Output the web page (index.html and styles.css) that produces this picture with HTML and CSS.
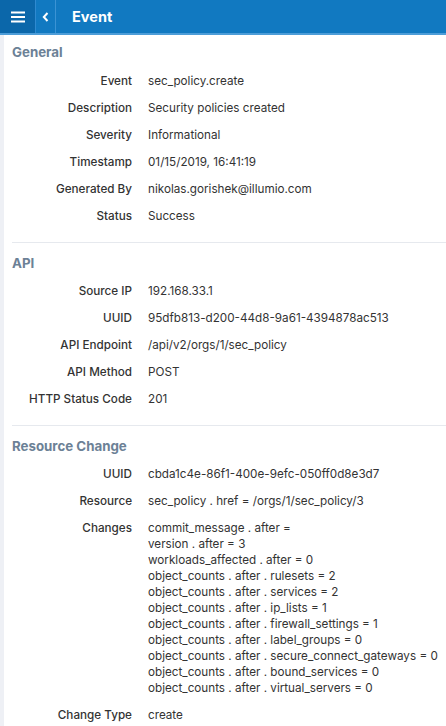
FILE: index.html
```html
<!DOCTYPE html>
<html>
<head>
<meta charset="utf-8">
<link rel="stylesheet" href="styles.css">
</head>
<body>
<div class="app">
  <header class="topbar">
    <div class="menu-btn">
      <svg width="14" height="12" viewBox="0 0 14 12"><rect x="0" y="0.5" width="14" height="2" fill="#fff"/><rect x="0" y="5" width="14" height="2" fill="#fff"/><rect x="0" y="9.5" width="14" height="2" fill="#fff"/></svg>
    </div>
    <div class="back-btn">
      <svg width="7" height="10" viewBox="0 0 7 10"><path d="M5.5 1 L1.8 5 L5.5 9" fill="none" stroke="#fff" stroke-width="2"/></svg>
    </div>
    <div class="title">Event</div>
  </header>
  <main class="content">
    <section class="section first">
      <h2 class="section-title">General</h2>
      <div class="grid">
        <div class="label">Event</div><div class="value">sec_policy.create</div>
        <div class="label">Description</div><div class="value">Security policies created</div>
        <div class="label">Severity</div><div class="value">Informational</div>
        <div class="label">Timestamp</div><div class="value">01/15/2019, 16:41:19</div>
        <div class="label">Generated By</div><div class="value">nikolas.gorishek@illumio.com</div>
        <div class="label">Status</div><div class="value">Success</div>
      </div>
    </section>
    <section class="section">
      <h2 class="section-title">API</h2>
      <div class="grid">
        <div class="label">Source IP</div><div class="value">192.168.33.1</div>
        <div class="label">UUID</div><div class="value">95dfb813-d200-44d8-9a61-4394878ac513</div>
        <div class="label">API Endpoint</div><div class="value">/api/v2/orgs/1/sec_policy</div>
        <div class="label">API Method</div><div class="value">POST</div>
        <div class="label">HTTP Status Code</div><div class="value">201</div>
      </div>
    </section>
    <section class="section last">
      <h2 class="section-title">Resource Change</h2>
      <div class="grid">
        <div class="label">UUID</div><div class="value">cbda1c4e-86f1-400e-9efc-050ff0d8e3d7</div>
        <div class="label">Resource</div><div class="value">sec_policy . href = /orgs/1/sec_policy/3</div>
        <div class="label">Changes</div>
        <div class="value lines">
          <div>commit_message . after =</div>
          <div>version . after = 3</div>
          <div>workloads_affected . after = 0</div>
          <div>object_counts . after . rulesets = 2</div>
          <div>object_counts . after . services = 2</div>
          <div>object_counts . after . ip_lists = 1</div>
          <div>object_counts . after . firewall_settings = 1</div>
          <div>object_counts . after . label_groups = 0</div>
          <div>object_counts . after . secure_connect_gateways = 0</div>
          <div>object_counts . after . bound_services = 0</div>
          <div>object_counts . after . virtual_servers = 0</div>
        </div>
        <div class="label">Change Type</div><div class="value">create</div>
      </div>
    </section>
  </main>
</div>
</body>
</html>
```
FILE: styles.css
```css
* { box-sizing: border-box; }
html, body { margin: 0; padding: 0; }
body {
  font-family: "Inter", "Liberation Sans", Arial, sans-serif;
  background: #fff;
  color: #333;
  overflow: hidden;
}
.app { width: 446px; height: 726px; }
.topbar {
  display: flex;
  align-items: stretch;
  height: 35px;
  background: #1179c1;
  border-bottom: 2px solid #4d9dd8;
}
.menu-btn {
  width: 36px;
  background: #0b67aa;
  display: flex;
  align-items: center;
  justify-content: center;
  border-right: 1px solid #2f8ad0;
}
.back-btn {
  width: 20px;
  display: flex;
  align-items: center;
  justify-content: center;
  border-right: 1px solid #3b93d4;
}
.title {
  color: #fff;
  font-weight: 700;
  font-size: 14.5px;
  padding-left: 16px;
  display: flex;
  align-items: center;
}
.content {
  border-left: 4px solid #eef0f5;
  padding-left: 8px;
  min-height: 691px;
}
.section {
  border-bottom: 1px solid #e6e9ee;
  padding: 9px 0 18px;
}
.section.first { padding-top: 6px; }
.section.first .grid { margin-top: 10px; }
.section.last { border-bottom: none; }
.section-title {
  margin: 0;
  font-size: 13.3px;
  font-weight: 700;
  color: #6c8196;
  line-height: 22px;
}
.grid {
  display: grid;
  grid-template-columns: 120px 1fr;
  column-gap: 16px;
  row-gap: 11px;
  margin-top: 9px;
  font-size: 11.7px;
  line-height: 16px;
}
.label { text-align: right; color: #333; font-weight: 500; }
.value { color: #333; }
```
